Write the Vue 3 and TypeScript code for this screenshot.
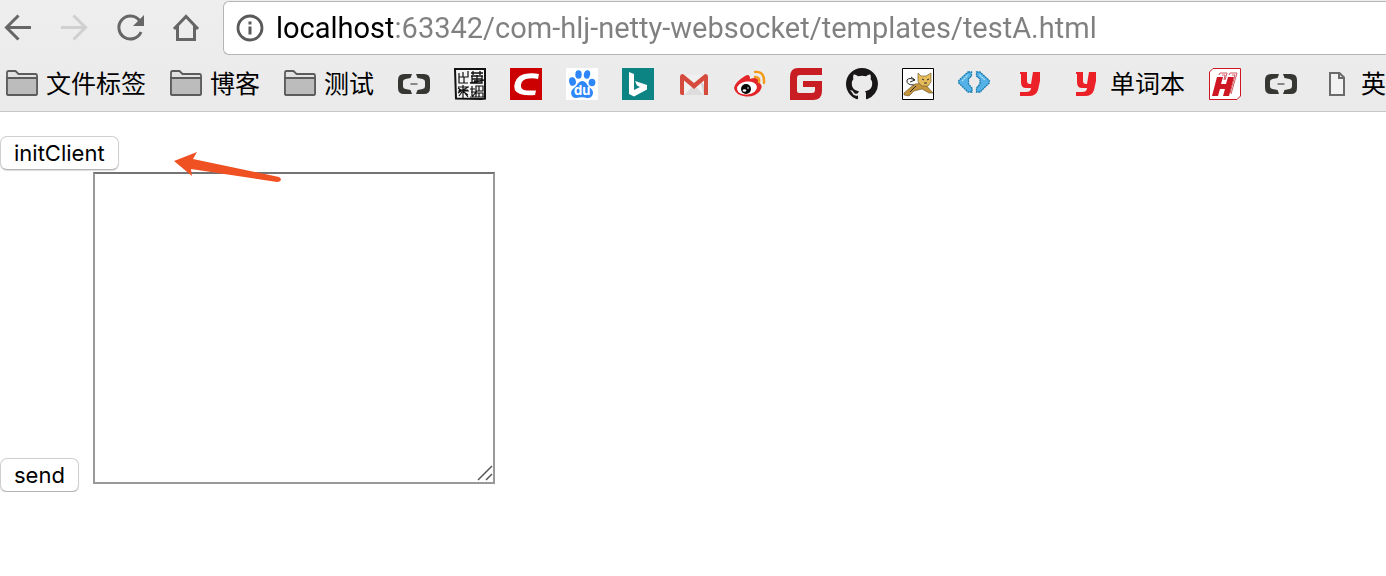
<script setup lang="ts">
import { ref } from 'vue'

interface Bookmark {
  icon: string
  label?: string
  title: string
}

const address = ref('localhost:63342/com-hlj-netty-websocket/templates/testA.html')
const message = ref('')

const bookmarks: Bookmark[] = [
  { icon: 'folder', label: '文件标签', title: '文件标签' },
  { icon: 'folder', label: '博客', title: '博客' },
  { icon: 'folder', label: '测试', title: '测试' },
  { icon: 'brackets', title: 'Aliyun' },
  { icon: 'seal', title: 'Seal' },
  { icon: 'csdn', title: 'CSDN' },
  { icon: 'baidu', title: 'Baidu' },
  { icon: 'bing', title: 'Bing' },
  { icon: 'gmail', title: 'Gmail' },
  { icon: 'weibo', title: 'Weibo' },
  { icon: 'gitee', title: 'Gitee' },
  { icon: 'github', title: 'GitHub' },
  { icon: 'tomcat', title: 'Tomcat' },
  { icon: 'chevrons', title: 'Code' },
  { icon: 'youdao', title: 'Youdao' },
  { icon: 'youdao', label: '单词本', title: '单词本' },
  { icon: 'hutool', title: 'H' },
  { icon: 'brackets', title: 'Aliyun' },
  { icon: 'page', label: '英', title: '英' },
]
</script>

<template>
  <div class="browser">
    <header class="chrome">
      <div class="toolbar">
        <nav class="nav" aria-label="Navigation">
          <button type="button" aria-label="Back">
            <svg viewBox="0 0 32 32" fill="none" stroke="#666" stroke-width="3">
              <path d="M29 15.5H5M16.5 3.5L4.500 15.500L16.500 27.500" />
            </svg>
          </button>
          <button type="button" aria-label="Forward" disabled>
            <svg viewBox="0 0 32 32" fill="none" stroke="#d0d0d0" stroke-width="3">
              <path d="M3 15.500H27M15.500 3.500L27.500 15.500L15.500 27.500" />
            </svg>
          </button>
          <button type="button" aria-label="Reload">
            <svg viewBox="0 0 32 32">
              <path d="M25.500 8.500A11.500 11.500 0 1 0 27 20" fill="none" stroke="#666" stroke-width="3" />
              <path d="M30 3V14H19Z" fill="#666" />
            </svg>
          </button>
          <button type="button" aria-label="Home">
            <svg viewBox="0 0 32 32" fill="none" stroke="#666" stroke-width="3">
              <path d="M4 17L16 4.500L28 17M7.500 14V27.500H24.500V14" />
            </svg>
          </button>
        </nav>
        <label class="address">
          <svg viewBox="0 0 28 28" aria-hidden="true">
            <circle cx="14" cy="14" r="12" fill="none" stroke="#5a5a5a" stroke-width="2.800" />
            <path d="M12.500 7.500H15.500V10.500H12.500ZM12.500 12.500H15.500V20.500H12.500Z" fill="#5a5a5a" />
          </svg>
          <input v-model="address" type="text" aria-label="Address" spellcheck="false" />
        </label>
      </div>

      <nav class="bookmarks" aria-label="Bookmarks">
        <a v-for="(item, index) in bookmarks" :key="index" href="#" :title="item.title">
          <svg viewBox="0 0 32 32" aria-hidden="true">
            <g v-if="item.icon === 'folder'" stroke="#5c5c5c" stroke-width="1.800" stroke-linejoin="round">
              <path d="M1 25.500V4.500Q1 3 2.500 3H9.500L12.500 6H29.500Q31 6 31 7.500V25.500Q31 27 29.500 27H2.500Q1 27 1 25.500Z" fill="#e2e2e2" />
              <path d="M1 10H31V25.500Q31 27 29.500 27H2.500Q1 27 1 25.500Z" fill="#bcbcbc" />
            </g>
            <g v-else-if="item.icon === 'brackets'">
              <path d="M14 6H6Q0 6 0 12V20Q0 26 6 26H14L12.500 22L7.500 21Q5 20.500 5 18.500V13.500Q5 11.500 7.500 11L12.500 10ZM18 6H26Q32 6 32 12V20Q32 26 26 26H18L19.500 22L24.500 21Q27 20.500 27 18.500V13.500Q27 11.500 24.500 11L19.500 10Z" fill="#363633" />
              <path d="M12.500 15H19.500V17H12.500Z" fill="#888" />
            </g>
            <g v-else-if="item.icon === 'seal'" fill="none" stroke="#111">
              <path d="M1 1H31V30.500L27 31L2 30.500Z" fill="#f4f4f4" stroke-width="2" />
              <path d="M5 5V15H14M9 4V9H5M14 3V9H10V15" stroke-width="1.200" />
              <path d="M17 5H29M19 3V7M26 3V7M17 8H29M18 8V15H28V8M18 11H28M23 7V15M20 13H26M16 15L30 12" stroke-width="1.300" />
              <path d="M4 19H15M5 22H14M9 17V30M4 25L14 19M4 20L14 27M5 28L8 24M14 29L10 24M4 23L15 23" stroke-width="1.200" />
              <path d="M18 18V28M16 21H21M17 24H22L18 29M22 18H29V23H22ZM25 18V23M22 25H29V29H22ZM25 25V29M16 29H30" stroke-width="1.200" />
            </g>
            <g v-else-if="item.icon === 'csdn'">
              <path d="M0 0H32V32H0Z" fill="#c00" />
              <path d="M29 6L28 11Q24 10 19 10.500Q12 11 11 16.500Q10 22 17 22.500H26L25 27Q16 28 10 26Q2 23 5 14.500Q8 6 18 5.500Q24 5 29 6Z" fill="#fff" />
            </g>
            <g v-else-if="item.icon === 'baidu'" fill="#2e87f8">
              <path d="M0 0H32V32H0Z" fill="#fff" />
              <ellipse cx="6.500" cy="13.500" rx="3.400" ry="4.300" transform="rotate(-12 6.500 13.500)" />
              <ellipse cx="12.500" cy="6.500" rx="3.200" ry="4.300" />
              <ellipse cx="21" cy="6.500" rx="3.100" ry="4.300" transform="rotate(12 21 6.500)" />
              <ellipse cx="26" cy="14.500" rx="3.400" ry="3.800" />
              <path d="M16 13Q19.500 13 21 16.500Q22 18.500 25 20.500Q28.500 24 26 28Q24 31 19 29.500Q16 29 13 29.500Q7 31 5.500 27Q4 23 8 20Q11 17.500 12 15.500Q13.500 13 16 13Z" />
              <text x="8" y="27" fill="#fff" class="paw-text">du</text>
            </g>
            <g v-else-if="item.icon === 'bing'">
              <path d="M0 0H32V32H0Z" fill="#0c8484" />
              <path d="M7 4L12 6V22L18 19L15 17.500L13 13L25 17V21.500L12 28.500L7 26Z" fill="#fff" />
            </g>
            <g v-else-if="item.icon === 'gmail'">
              <path d="M2 7H30V27H2Z" fill="#f0f0f0" />
              <path d="M6 27L16 17L26 27Z" fill="#ddd" />
              <path d="M22 13L30 20V27H26Z" fill="#d5d5d5" />
              <path d="M2 9Q2 6 5 6L16 15L27 6Q30 6 30 9V27H26V12.500L16 21L6 12.500V27H4Q2 27 2 25Z" fill="#d54b3d" />
            </g>
            <g v-else-if="item.icon === 'weibo'">
              <path d="M11 8Q16 5 16 11Q25 8 24 14Q30 17 26 23Q21 29 12 28.500Q1 27 0 20Q1 14 11 8Z" fill="#e32529" />
              <ellipse cx="13" cy="20" rx="10" ry="6.500" fill="#fff" transform="rotate(-7 13 20)" />
              <circle cx="12" cy="21" r="5" fill="#050505" />
              <ellipse cx="10.500" cy="22.500" rx="1.800" ry="1.300" fill="#fff" />
              <circle cx="14" cy="20" r=".8" fill="#fff" />
              <path d="M21 4Q31 3 30 15M21 9Q26 9 25 14" fill="none" stroke="#f39b19" stroke-width="2.400" stroke-linecap="round" />
            </g>
            <path v-else-if="item.icon === 'gitee'" d="M8 0H32V7H10Q7 7 7 10V23Q7 25 9 25H22Q25 25 25 22V19H13V13H32V23Q32 32 23 32H0V9Q0 0 8 0Z" fill="#c71d23" />
            <path v-else-if="item.icon === 'github'" transform="scale(2)" fill="#181616" d="M8 0C3.580 0 0 3.580 0 8c0 3.540 2.290 6.530 5.470 7.590.4.070.55-.17.55-.38v-1.490c-2.230.480-2.700-.94-2.700-.94-.36-.92-.89-1.170-.89-1.170-.73-.500.05-.49.05-.49.810.05 1.230.83 1.230.83.710 1.230 1.870.87 2.330.660.07-.51.280-.87.500-1.070-1.770-.20-3.640-.89-3.640-3.950 0-.87.310-1.590.82-2.150-.08-.20-.36-1.020.08-2.120 0 0 .67-.21 2.200.82A7.600 7.600 0 0 1 8 3.870c.68 0 1.360.09 2 .27 1.530-1.040 2.200-.82 2.200-.82.440 1.100.16 1.920.08 2.120.510.560.820 1.270.820 2.150 0 3.070-1.870 3.750-3.650 3.950.290.250.540.730.540 1.480v2.190c0 .21.150.46.550.38A8.010 8.010 0 0 0 16 8c0-4.420-3.580-8-8-8Z" />
            <g v-else-if="item.icon === 'tomcat'">
              <path d="M.5.5H31.500V31.500H.5Z" fill="#fff" stroke="#000" />
              <path d="M2 25L9 19L13 16L22 15L31 25L27 25L20 21L12 23L7 28L2 27Z" fill="#c5943b" stroke="#625027" stroke-width=".6" />
              <path d="M16 5L19 8H24L29 5V14L26 18H20L16 14Z" fill="#e5bc59" stroke="#665225" stroke-width=".6" />
              <path d="M12 17Q4 17 5 12Q7 9 13 12M9 9L13 12L8 14M8 24L14 18M20 11L22 12M25 12L27 11M22 15H25" fill="none" stroke="#292929" stroke-width="1" />
            </g>
            <g v-else-if="item.icon === 'chevrons'" fill="#55b2e6" stroke="#197bb0" stroke-width="1.300" stroke-dasharray="2 .6">
              <path d="M10 4H13.500V8L10.500 11V16L14 20V24H10L.8 15V12.500Z" />
              <path d="M18.500 4H22L31.200 12.500V15L22 24H18.500V20L22 16V11L18.500 8Z" />
              <path d="M4 13L10 7M21.500 7L27 12" stroke="#aee4fa" />
            </g>
            <path v-else-if="item.icon === 'youdao'" d="M6 4H13V13Q13 16 16 16H17L19 4H26V13L24 22Q22 28 15 28H6V24H12Q17 24 17 20H12Q7 20 7 14V6H6Z" fill="#ec2027" />
            <g v-else-if="item.icon === 'hutool'">
              <path d="M4 .5H31.500V28L28 31.500H.5V4Z" fill="#fff" stroke="#ce1723" />
              <path d="M8 9H14L12 16H17L19 9H25L20 28H14L16 21H11L9 28H3Z" fill="#ce1723" />
              <path d="M10 7L11 5H18L16 12M20 7L21 5H28L22 26M13 7H16L15 12M23 7H26L21 25" fill="none" stroke="#ce4a52" stroke-width=".9" />
            </g>
            <path v-else d="M9 5H18.500L23 9.500V27H9ZM18 5V10H23" fill="#f2f2f2" stroke="#6b6b6b" stroke-width="2" />
          </svg>
          <span v-if="item.label">{{ item.label }}</span>
        </a>
      </nav>
    </header>

    <main class="page">
      <button type="button" class="push">initClient</button>
      <svg class="pointer" viewBox="0 0 108 32" aria-hidden="true">
        <path d="M0 10L23 1L19 8L105 26Q107 27 107 29Q106 31 103 31L17 18L18 25Z" fill="#f05123" />
      </svg>
      <div class="composer">
        <button type="button" class="push">send</button>
        <div class="field">
          <textarea v-model="message" aria-label="Message"></textarea>
          <svg class="grip" viewBox="0 0 16 16" aria-hidden="true">
            <path d="M1 15L15 1M9 15L15 9" fill="none" stroke="#555" stroke-width="1.500" />
          </svg>
        </div>
      </div>
    </main>
  </div>
</template>

<style>
body {
  margin: 0;
  background: #fff;
}
</style>

<style scoped>
.browser {
  overflow: hidden;
  color: #000;
  font-family: Inter, "Noto Sans CJK SC", sans-serif;
}

.chrome {
  border-bottom: 1px solid #c6c6c6;
  background: linear-gradient(#eee, #eaeaea);
}

.toolbar {
  display: flex;
  align-items: center;
  gap: 21px;
  padding: 1px 0;
}

.nav {
  display: flex;
  gap: 24px;
  padding-left: 2px;
}

.nav button {
  display: block;
  padding: 0;
  border: 0;
  background: none;
}

.nav svg {
  display: block;
  width: 32px;
  height: 32px;
}

.address {
  display: flex;
  flex: 1;
  align-items: center;
  gap: 12px;
  box-sizing: border-box;
  height: 54px;
  padding-left: 12px;
  border: 1px solid #b5b5b5;
  border-right: 0;
  border-radius: 6px 0 0 6px;
  background: #fff;
}

.address svg {
  flex: none;
  width: 28px;
  height: 28px;
}

.address input {
  flex: 1;
  min-width: 0;
  padding: 0;
  border: 0;
  outline: 0;
  background: linear-gradient(90deg, #000 117px, #808080 117px) text;
  color: transparent;
  font: 29px/40px Roboto, sans-serif;
}

.bookmarks {
  display: flex;
  align-items: center;
  gap: 24px;
  height: 55px;
  padding-left: 6px;
}

.bookmarks a {
  display: flex;
  flex: none;
  align-items: center;
  gap: 8px;
  color: #000;
  font-size: 25px;
  line-height: 32px;
  text-decoration: none;
}

.bookmarks svg {
  width: 32px;
  height: 32px;
}

.paw-text {
  font: bold 13px Inter, sans-serif;
}

.page {
  position: relative;
  padding-top: 24px;
}

.push {
  display: block;
  height: 34px;
  padding: 0 13px;
  border: 1px solid #cfcfcf;
  border-bottom-color: #b5b5b5;
  border-radius: 7px;
  background: #fff;
  box-shadow: 0 1px 1px #ddd;
  color: #000;
  font: 22px/32px Inter, sans-serif;
}

.composer {
  display: flex;
  align-items: flex-end;
  gap: 14px;
  margin-top: 2px;
}

.field {
  position: relative;
  margin-bottom: 8px;
}

.field textarea {
  display: block;
  box-sizing: border-box;
  width: 402px;
  height: 312px;
  padding: 4px;
  border: 2px solid #999;
  border-top-color: #737373;
  outline: 0;
  background: #fff;
  font: 22px/28px Inter, sans-serif;
  resize: none;
}

.grip {
  position: absolute;
  right: 2px;
  bottom: 3px;
  width: 16px;
  height: 16px;
  pointer-events: none;
}

.pointer {
  position: absolute;
  z-index: 1;
  top: 39px;
  left: 174px;
  width: 108px;
  height: 32px;
  pointer-events: none;
}
</style>
